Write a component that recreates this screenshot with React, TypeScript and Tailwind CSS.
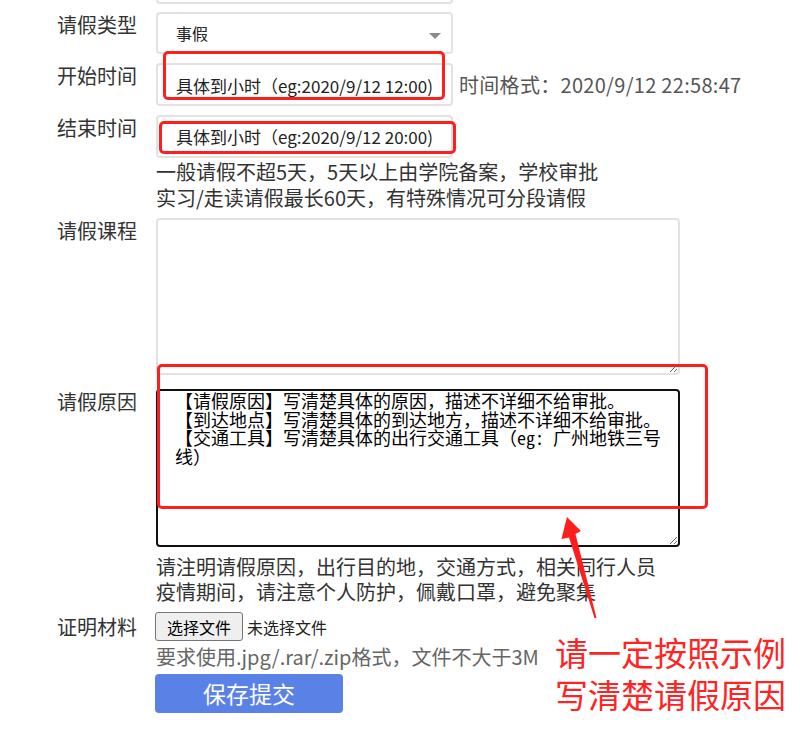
import React from "react";

const FONT = '"Noto Sans CJK SC", "Noto Sans", sans-serif';
const MONO = '"Noto Sans Mono CJK SC", "Noto Sans CJK SC", monospace';

function Label({ children }: { children: React.ReactNode }) {
  return (
    <div className="w-[137px] mr-[19px] shrink-0 text-right text-[20px] leading-[26px] text-[#333]">
      {children}
    </div>
  );
}

export default function App() {
  const reason =
    "【请假原因】写清楚具体的原因，描述不详细不给审批。\n【到达地点】写清楚具体的到达地方，描述不详细不给审批。\n【交通工具】写清楚具体的出行交通工具（eg: 广州地铁三号\n线）";
  return (
    <div
      className="relative w-[800px] h-[733px] overflow-hidden bg-white"
      style={{ fontFamily: FONT }}
    >
      {/* cut-off field above */}
      <div className="ml-[156px] w-[297px] h-[4px] border-2 border-t-0 border-[#e2e2e2] rounded-b-[4px]" />

      {/* 请假类型 */}
      <div className="flex mt-[8px]">
        <Label>请假类型</Label>
        <div className="w-[297px] h-[42px] border-2 border-[#e2e2e2] rounded-[4px] flex items-center justify-between pl-[18px] pr-[10px]">
          <span className="text-[16px] text-[#222]">事假</span>
          <span className="w-0 h-0 border-l-[6px] border-r-[6px] border-t-[6px] border-l-transparent border-r-transparent border-t-[#8a8a8a] mt-[5px]" />
        </div>
      </div>

      {/* 开始时间 */}
      <div className="flex mt-[9px]">
        <Label>开始时间</Label>
        <input
          readOnly
          defaultValue="具体到小时（eg:2020/9/12 12:00)"
          className="w-[297px] h-[43px] border-2 border-[#e2e2e2] rounded-[4px] pl-[18px] pt-[2px] text-[17px] text-[#222] outline-none"
        />
        <div className="ml-[6px] h-[43px] flex items-center pt-[1px] text-[20px] tracking-[0.3px] text-[#555]">
          时间格式：2020/9/12 22:58:47
        </div>
      </div>

      {/* 结束时间 */}
      <div className="flex mt-[9px]">
        <Label>结束时间</Label>
        <input
          readOnly
          defaultValue="具体到小时（eg:2020/9/12 20:00)"
          className="w-[297px] h-[43px] border-2 border-[#e2e2e2] rounded-[4px] pl-[18px] text-[17px] text-[#222] outline-none"
        />
      </div>

      <div className="ml-[156px] mt-[1px] text-[20px] leading-[26px] text-[#333]">
        <div>一般请假不超5天，5天以上由学院备案，学校审批</div>
        <div>实习/走读请假最长60天，有特殊情况可分段请假</div>
      </div>

      {/* 请假课程 */}
      <div className="flex mt-[7px]">
        <Label>请假课程</Label>
        <textarea
          readOnly
          className="w-[524px] h-[157px] border-2 border-[#e2e2e2] rounded-[4px] outline-none"
        />
      </div>

      {/* 请假原因 */}
      <div className="flex mt-[14px]">
        <Label>请假原因</Label>
        <textarea
          readOnly
          defaultValue={reason}
          className="w-[524px] h-[158px] border-2 border-[#111] rounded-[4px] outline-none pl-[17px] pr-[8px] pt-0 text-[18px] leading-[18.5px] text-black"
          style={{ fontFamily: MONO }}
        />
      </div>

      <div className="ml-[156px] mt-[7px] text-[20px] leading-[25px] text-[#333]">
        <div>请注明请假原因，出行目的地，交通方式，相关同行人员</div>
        <div>疫情期间，请注意个人防护，佩戴口罩，避免聚集</div>
      </div>

      {/* 证明材料 */}
      <div className="flex items-center mt-[8px]">
        <Label>证明材料</Label>
        <div className="-ml-[1px] flex items-center">
          <button className="h-[29px] w-[88px] bg-[#efefef] border border-[#767676] rounded-[3px] text-[16px] text-black">
            选择文件
          </button>
          <span className="ml-[4px] text-[16px] text-[#222]">未选择文件</span>
        </div>
      </div>

      <div className="ml-[156px] mt-[3px] text-[20px] leading-[26px] text-[#666]">
        要求使用.jpg/.rar/.zip格式，文件不大于3M
      </div>

      <div className="ml-[155px] mt-[4px]">
        <button className="w-[188px] h-[39px] bg-[#5a82e6] rounded-[4px] text-white text-[23px] leading-[39px]">
          保存提交
        </button>
      </div>

      {/* red annotations */}
      <div className="absolute left-[163px] top-[51px] w-[282px] h-[49px] border-[3px] border-[#ff1e1e] rounded-[5px]" />
      <div className="absolute left-[159px] top-[121px] w-[297px] h-[33px] border-[3px] border-[#ff1e1e] rounded-[5px]" />
      <div className="absolute left-[157px] top-[364px] w-[551px] h-[145px] border-[3px] border-[#ff1e1e] rounded-[5px]" />

      <svg className="absolute left-0 top-0" width="800" height="733" viewBox="0 0 800 733">
        <polygon
          points="567,517 581,531 575.5,534 596.5,618 594.5,618 569,537.5 561.5,539"
          fill="#ff1e1e"
        />
      </svg>

      <div className="absolute left-[555px] top-[631px] text-[33px] leading-[42px] text-[#ff2424] whitespace-nowrap">
        <div>请一定按照示例</div>
        <div>写清楚请假原因</div>
      </div>
    </div>
  );
}
